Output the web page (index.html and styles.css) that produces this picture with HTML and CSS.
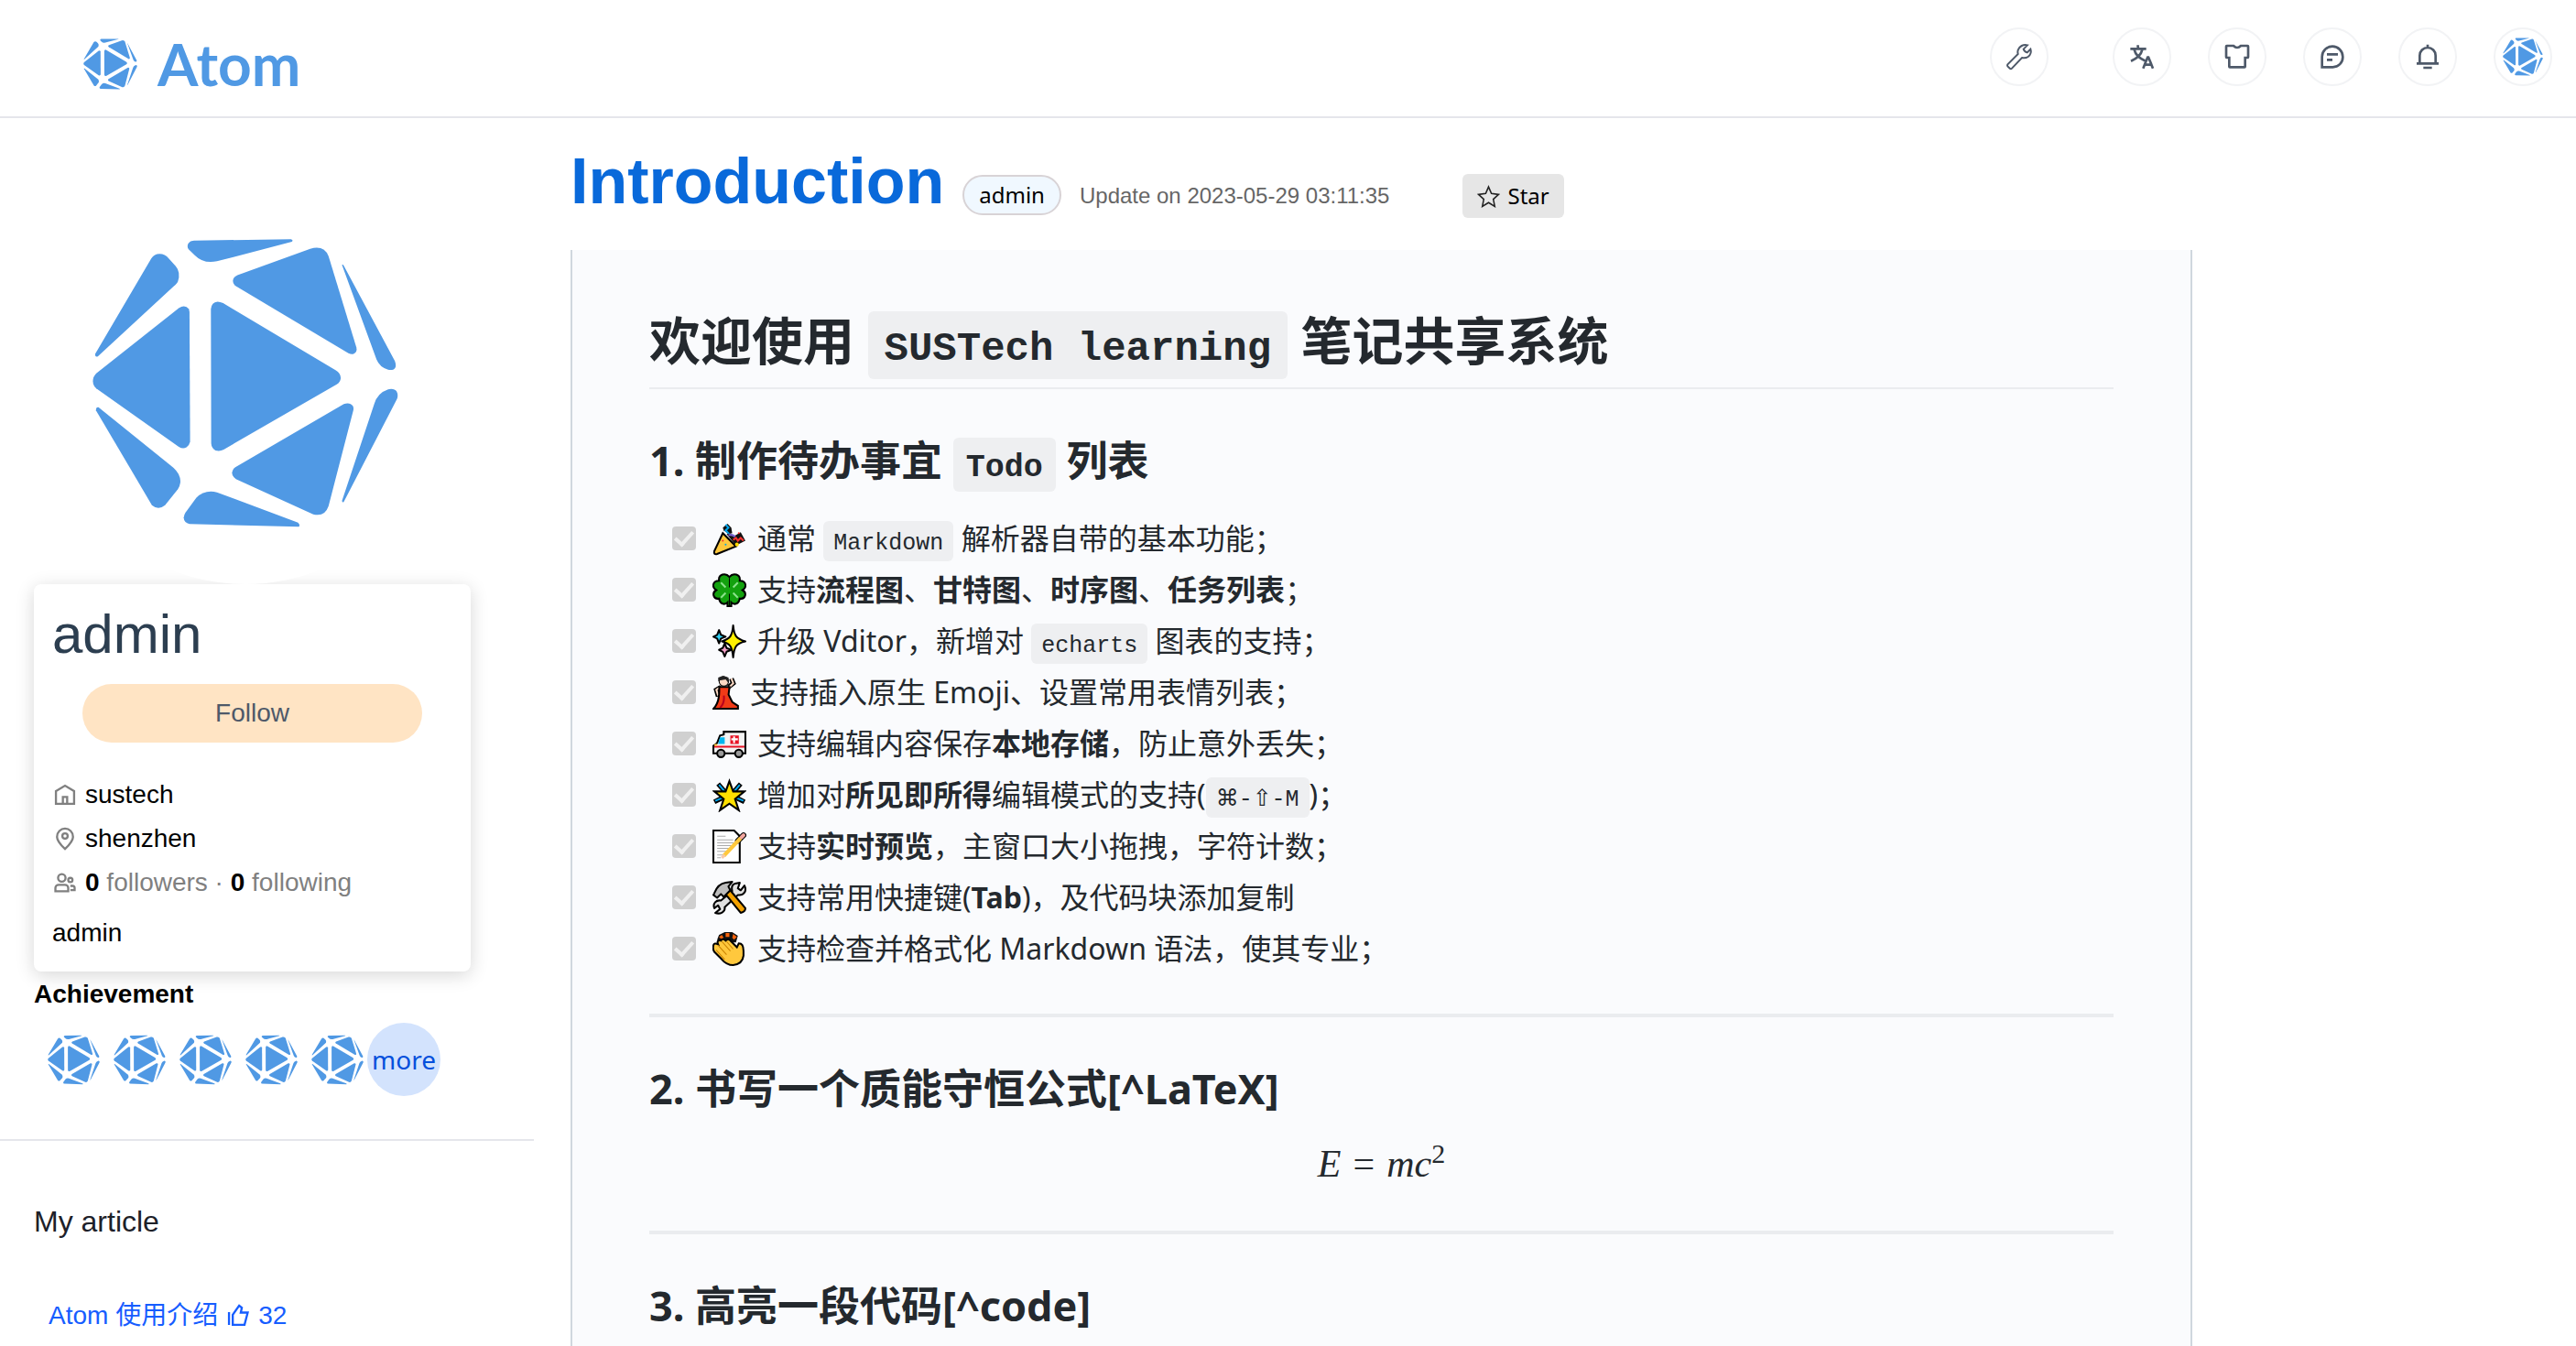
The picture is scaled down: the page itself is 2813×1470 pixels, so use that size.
FILE: index.html
```html
<!DOCTYPE html>
<html lang="zh-CN">
<head>
<meta charset="utf-8">
<title>Atom - Introduction</title>
<link rel="stylesheet" href="styles.css">
</head>
<body>
<svg class="sprite" aria-hidden="true">
  <symbol id="atom" viewBox="120 58 1006 950">
    <path d="M437 95C428 82 438 66 455 66L772 62Q781 65 775 70L530 134Q485 143 458 115Z"/>
    <path d="M315 125Q325 110 342 110Q360 110 372 125L395 150Q412 170 402 200Q400 205 388 216L140 445Q131 449 131 438Z"/>
    <path d="M405 287Q425 274 438 290L440 300L442 725Q440 735 430 743Q418 749 405 741L135 550Q124 540 124 526Q124 512 135 501Z"/>
    <path d="M510 290Q512 268 532 266Q540 266 550 271L918 490Q935 500 935 516Q934 530 922 537L552 750Q540 757 525 753Q512 745 511 730Z"/>
    <path d="M597 179L835 93Q880 80 895 117L986 415Q990 430 977 437Q970 440 960 435L592 215Q582 208 582 198Q583 185 597 179Z"/>
    <path d="M939 146Q942 143 945 149L1112 460Q1120 480 1108 488Q1100 491 1090 489Q1062 480 1052 455Z"/>
    <path d="M1045 600Q1055 565 1090 553Q1110 549 1118 560Q1124 572 1119 585L945 921Q941 926 939 918Z"/>
    <path d="M590 808L945 601Q965 594 975 608Q978 615 976 622L895 935Q882 972 845 962L592 847Q579 838 579 826Q580 815 590 808Z"/>
    <path d="M427 956L462 908Q490 880 530 890L795 989Q803 996 798 1003L440 994Q422 990 421 973Q422 963 427 956Z"/>
    <path d="M134 622Q133 610 142 612L388 810Q412 832 410 858Q408 872 402 880L360 932Q338 950 317 932Z"/>
  </symbol>
</svg>

<header class="topbar">
  <a class="brand" href="#"><svg class="brand-mark"><use href="#atom"/></svg><span>Atom</span></a>
  <nav class="tools" aria-label="Tools">
    <button class="tool tool-first" aria-label="Settings"><svg class="thin" viewBox="0 0 48 48"><path d="M37.500 5C31 3 24 7 22 13Q21 16 22 19.500L5 36.500Q4 38 5 39.500L9 43.500Q10.500 44.500 12 43L28.500 25.500Q34 27 38.500 24Q45 19 42.500 11.500L37 17Q32.500 16 31 11.500Z"/></svg></button>
    <button class="tool" aria-label="Language"><svg viewBox="0 0 48 48"><path d="m42 43-2.385-6M26 43l2.384-6m11.231 0-.795-2-4.18-10h-1.28l-4.181 10-.795 2m11.231 0h-11.23M17 5l1 5M5 11h26M11 11s1.889 7.826 6.611 12.174C22.333 27.522 30 31 30 31M25 11s-1.889 7.826-6.611 12.174C13.667 27.522 6 31 6 31"/></svg></button>
    <button class="tool" aria-label="Theme"><svg viewBox="0 0 48 48"><path d="M17.936 6H7a1 1 0 0 0-1 1v17.559a1 1 0 0 0 1 1h4V40a1 1 0 0 0 1 1h24a1 1 0 0 0 1-1V25.559h4a1 1 0 0 0 1-1V7a1 1 0 0 0-1-1H30.064C28.854 7.230 26.590 9.059 24 9.059S19.147 7.230 17.936 6Z"/></svg></button>
    <button class="tool" aria-label="Messages"><svg viewBox="0 0 48 48"><path d="M15 20h18m-18 9h9M7 41h17.630C33.670 41 41 33.670 41 24.630V24c0-9.389-7.611-17-17-17S7 14.611 7 24v17Z"/></svg></button>
    <button class="tool" aria-label="Notifications"><svg viewBox="0 0 48 48"><path d="M24 9c7.180 0 13 5.820 13 13v13H11V22c0-7.180 5.820-13 13-13Zm0 0V4M6 35h36m-25 7h14"/></svg></button>
    <button class="tool" aria-label="Account"><svg class="tool-avatar"><use href="#atom"/></svg></button>
  </nav>
</header>

<div class="page">
  <aside class="side">
    <section class="profile">
      <div class="avatar"><svg><use href="#atom"/></svg></div>
      <div class="card">
        <h2 class="name">admin</h2>
        <button class="follow">Follow</button>
        <ul class="facts">
          <li><svg viewBox="0 0 48 48"><path d="M7 17 24 7l17 10v24H7V17ZM20 28h8v13h-8V28Z"/></svg><span>sustech</span></li>
          <li><svg viewBox="0 0 48 48"><circle cx="24" cy="19" r="5"/><path d="M39 20.405C39 28.914 24 43 24 43S9 28.914 9 20.405C9 11.897 15.716 5 24 5c8.284 0 15 6.897 15 15.405Z"/></svg><span>shenzhen</span></li>
          <li><svg viewBox="0 0 48 48"><circle cx="18" cy="15" r="7"/><circle cx="34" cy="19" r="4"/><path d="M6 34a6 6 0 0 1 6-6h12a6 6 0 0 1 6 6v6H6v-6ZM34 30h4a4 4 0 0 1 4 4v4h-8"/></svg><span class="muted"><b>0</b> followers · <b>0</b> following</span></li>
        </ul>
        <p class="bio">admin</p>
      </div>
      <h3 class="label">Achievement</h3>
      <div class="achievements">
        <svg><use href="#atom"/></svg><svg><use href="#atom"/></svg><svg><use href="#atom"/></svg><svg><use href="#atom"/></svg><svg><use href="#atom"/></svg>
        <a class="more" href="#">more</a>
      </div>
    </section>
    <section class="mine">
      <h3>My article</h3>
      <a href="#">Atom 使用介绍 <svg viewBox="0 0 48 48"><path d="M7 17v24M14 22v19h22L42 18H29L31 9 26 5 14 22Z"/></svg> 32</a>
    </section>
  </aside>

  <main class="main">
    <div class="heading">
      <h1>Introduction</h1>
      <a class="author" href="#">admin</a>
      <time datetime="2023-05-29T03:11:35">Update on 2023-05-29 03:11:35</time>
      <button class="star"><svg viewBox="0 0 48 48"><path d="M24 4l6 14 15 2-11 10 3 15-13-8-13 8 3-15L3 20l15-2Z"/></svg><span>Star</span></button>
    </div>
    <article class="doc">
      <h1>欢迎使用 <code>SUSTech learning</code> 笔记共享系统</h1>
      <h2>1. 制作待办事宜 <code>Todo</code> 列表</h2>
      <ul class="tasks">
        <li><label><input type="checkbox" checked disabled>
          <svg class="emoji" viewBox="0 0 36 36"><path d="M11 12 25 26 5 34Q1 35 2 31Z" fill="#ffc83d" stroke="#000" stroke-width="2"/><path d="M11 6l5-4 4 4 1 6-4 1-5-4Z" fill="#111"/><path d="M14 3l3 3-3 3 4 4" fill="none" stroke="#00a6ed" stroke-width="2"/><path d="M15 13q5-2 8 2l7-4 5 9-10 5Z" fill="#111"/><path d="M22 19l3-2 2 3 3-3 3 3" fill="none" stroke="#f8312f" stroke-width="2"/><path d="M17 14q5-1 7 2" fill="none" stroke="#7860d0" stroke-width="2"/><circle cx="26" cy="24" r="2" fill="#ffd800"/><circle cx="28" cy="12" r="1" fill="#f8312f"/><circle cx="11" cy="20" r="1" fill="#f8312f"/><circle cx="14" cy="24" r="1" fill="#00a6ed"/></svg>
          <span>通常 <code>Markdown</code> 解析器自带的基本功能；</span></label></li>
        <li><label><input type="checkbox" checked disabled>
          <svg class="emoji" viewBox="0 0 36 36"><path d="M18 4C14-1 6 1 7 8 0 8-1 15 4 18-1 21 1 28 7 27 8 33 13 34 16 31V35H20V31C23 34 28 33 29 27 35 28 37 21 32 18 37 15 36 8 29 8 30 1 22-1 18 4Z" fill="#13a10e" stroke="#000" stroke-width="2"/><path d="M18 5v10M18 22v12" stroke="#000" stroke-width="1"/><path d="M9 10l5 5M27 10l-5 5M9 26l5-5M27 26l-5-5" stroke="#8be28b" stroke-width="2"/></svg>
          <span>支持<b>流程图</b>、<b>甘特图</b>、<b>时序图</b>、<b>任务列表</b>；</span></label></li>
        <li><label><input type="checkbox" checked disabled>
          <svg class="emoji" viewBox="0 0 36 36"><g stroke="#000" stroke-width="2" stroke-linejoin="round"><path d="M7 6l2 5 5 2-5 2-2 5-2-5-4-2 4-2Z" fill="#31d2f7"/><path d="M13 20l2 5 5 2-5 2-2 5-2-5-4-2 4-2Z" fill="#f4a0c8"/><path d="M22 1C23 12 25 15 35 18 25 20 23 24 22 35 21 24 19 20 10 18 19 15 21 12 22 1Z" fill="#fff100"/></g></svg>
          <span>升级 Vditor，新增对 <code>echarts</code> 图表的支持；</span></label></li>
        <li><label><input type="checkbox" checked disabled>
          <svg class="emoji emoji-narrow" viewBox="0 0 28 36"><path d="M9 12l-5 3 2 7M17 12l5-4-2-5" fill="none" stroke="#000" stroke-width="5"/><path d="M8 12l-4 3 2 6M18 12l4-4-2-5" fill="none" stroke="#fcd9c4" stroke-width="2"/><path d="M7 12h11l-1 8 4 8 6 4v3H1q7-7 6-23Z" fill="#f03a17" stroke="#000" stroke-width="2"/><path d="M12 21q1 8-4 13" fill="none" stroke="#b8001e" stroke-width="2"/><circle cx="12" cy="6" r="5" fill="#fcd9c4" stroke="#000" stroke-width="1"/><path d="M6 6V2l5-2 6 2v6l-3-4-7 1Z" fill="#222"/></svg>
          <span>支持插入原生 Emoji、设置常用表情列表；</span></label></li>
        <li><label><input type="checkbox" checked disabled>
          <svg class="emoji" viewBox="0 0 36 36"><path d="M12 5H35V28H1V20L5 17 8 9 12 8Z" fill="#f3f3f3" stroke="#000" stroke-width="2"/><path d="M8 11h5v7H6Z" fill="#00b7f0"/><path d="M19 9h9v9h-9Z" fill="#e81224"/><path d="M23 10v7M20 13h7" stroke="#fff" stroke-width="2"/><path d="M2 21h32" stroke="#e81224" stroke-width="2"/><path d="M2 18h3v2H2Z" fill="#ffc83d"/><g fill="#9a9a9a" stroke="#000" stroke-width="2"><circle cx="9" cy="28" r="4"/><circle cx="28" cy="28" r="4"/></g></svg>
          <span>支持编辑内容保存<b>本地存储</b>，防止意外丢失；</span></label></li>
        <li><label><input type="checkbox" checked disabled>
          <svg class="emoji" viewBox="0 0 36 36"><path d="M6 6l7 8M30 6l-7 8M2 25l8-4M34 25l-8-4" stroke="#000" stroke-width="5"/><path d="M7 7l6 7M29 7l-6 7M3 24l7-3M33 24l-7-3" stroke="#00a6ed" stroke-width="2"/><path d="M18 3l4 11h12l-10 8 4 12-10-7-10 7 4-12L2 14h12Z" fill="#ffe000" stroke="#000" stroke-width="2"/></svg>
          <span>增加对<b>所见即所得</b>编辑模式的支持(<code>⌘-⇧-M</code>)；</span></label></li>
        <li><label><input type="checkbox" checked disabled>
          <svg class="emoji" viewBox="0 0 36 36"><path d="M1 1H23L29 7V35H1Z" fill="#fff" stroke="#000" stroke-width="2"/><path d="M5 7h9M5 11h17M5 14h18M5 17h17M5 20h14M5 23h12M5 27h8M5 30h4" stroke="#aaa" stroke-width="1"/><path d="M27 12L33 6" stroke="#000" stroke-width="6" stroke-linecap="round"/><path d="M12 28L30 9" stroke="#ffc83d" stroke-width="4"/><path d="M10 30l3-3" stroke="#f8c9a8" stroke-width="3"/><path d="M31 8L33 6" stroke="#f4a7a0" stroke-width="4" stroke-linecap="round"/></svg>
          <span>支持<b>实时预览</b>，主窗口大小拖拽，字符计数；</span></label></li>
        <li><label><input type="checkbox" checked disabled>
          <svg class="emoji" viewBox="0 0 36 36"><g stroke="#000" stroke-width="2" stroke-linejoin="round"><path d="M24 3l5-1-2 6 3 2 4-5c3 6-1 11-7 10L13 28c1 5-5 8-10 6l5-4-2-4-4 3c-2-5 2-9 7-8L21 11c-1-4 0-7 3-8Z" fill="#e0e0e0"/><path d="M13 13l5-4L35 29q0 4-5 5Z" fill="#f2a100"/><path d="M2 13Q6 3 14 2L21 1 17 6 19 10 12 17 9 14 5 18 1 15Z" fill="#bdbdbd"/></g></svg>
          <span>支持常用快捷键(<b>Tab</b>)，及代码块添加复制</span></label></li>
        <li><label><input type="checkbox" checked disabled>
          <svg class="emoji" viewBox="0 0 36 36"><path d="M5 8l2-5 6-3h8l6 4-2 7H7Z" fill="#111"/><path d="M9 7l-2-2 3-2 2 3ZM14 5V1h4v4ZM21 6l1-4 4 3-3 3Z" fill="#f7630c"/><path d="M1 14Q2 11 6 13 4 8 9 9 11 6 14 9 17 6 20 10L26 16 28 12Q33 12 33 20V25Q32 34 22 35 15 35 10 29L2 21Q0 18 1 14Z" fill="#ffc83d" stroke="#000" stroke-width="2"/><path d="M4 19l9 10M6 14l9 10M10 10l9 10M15 10l7 8" stroke="#c98200" stroke-width="1"/></svg>
          <span>支持检查并格式化 Markdown 语法，使其专业；</span></label></li>
      </ul>
      <hr>
      <h2>2. 书写一个质能守恒公式[^LaTeX]</h2>
      <p class="formula"><i>E</i><span class="relation">=</span><i>mc</i><sup>2</sup></p>
      <hr>
      <h2>3. 高亮一段代码[^code]</h2>
    </article>
  </main>
</div>
</body>
</html>
```

FILE: styles.css
```css
* { box-sizing: border-box; }

body {
  margin: 0;
  min-height: 100vh;
  display: flex;
  flex-direction: column;
  background: #fff;
  color: #000;
  font: 28px/48px "Liberation Sans", "Noto Sans CJK SC", sans-serif;
}

h1, h2, h3, p, ul { margin: 0; padding: 0; font-weight: 400; }
ul { list-style: none; }
a { text-decoration: none; }
svg { display: block; flex: none; }
button { border: 0; padding: 0; font: inherit; cursor: pointer; }
.sprite { position: absolute; width: 0; height: 0; }
use { fill: #5099e4; }

.topbar {
  display: flex;
  justify-content: space-between;
  padding: 30px 26px 33px 91px;
  border-bottom: 2px solid #e5e6eb;
}
.brand {
  display: flex;
  align-items: center;
  gap: 22px;
  height: 64px;
  padding-top: 16px;
  color: #5099e4;
  font: 700 64px/64px Lato, sans-serif;
}
.brand-mark { width: 59px; height: 56px; }
.tools { display: flex; gap: 40px; }
.tool {
  display: grid;
  place-items: center;
  width: 64px;
  height: 64px;
  border: 2px solid #f2f3f5;
  border-radius: 50%;
  background: #fff;
}
.tool-first { margin-right: 30px; }
.tool svg { width: 32px; height: 32px; fill: none; stroke: #4e5969; stroke-width: 4; }
.tool .thin { stroke-width: 3; }
.tool .tool-avatar { width: 44px; height: 42px; stroke: none; }

.page {
  flex: 1;
  display: grid;
  grid-template-columns: 583fr 1771fr 379fr;
  column-gap: 40px;
}

.profile { padding: 69px 69px 47px 37px; border-bottom: 2px solid #e5e6eb; }
.avatar {
  position: relative;
  z-index: 1;
  display: grid;
  place-items: center;
  width: 440px;
  height: 440px;
  margin-left: 11px;
  border-radius: 50%;
  background: #fff;
}
.avatar svg { width: 336px; height: 317px; }
.card {
  padding: 21px 20px 18px;
  border-radius: 8px;
  background: #fff;
  box-shadow: 0 4px 20px rgba(0, 0, 0, .16);
}
.name { color: #2c3e50; font-size: 60px; line-height: 68px; }
.follow {
  display: block;
  width: calc(100% - 66px);
  height: 64px;
  margin: 20px 33px 33px;
  border-radius: 32px;
  background: #ffe4c4;
  color: #4e5969;
}
.facts li { display: flex; align-items: center; gap: 8px; }
.facts svg { width: 28px; height: 28px; fill: none; stroke: #808080; stroke-width: 4; }
.muted { color: #808080; }
.muted b { color: #000; }
.bio { margin-top: 7px; }
.label { font-size: 28px; font-weight: 700; line-height: 50px; }
.achievements { display: flex; align-items: center; gap: 15px; margin-top: 6px; padding-left: 15px; }
.achievements svg { width: 57px; height: 55px; }
.more {
  width: 80px;
  height: 80px;
  margin-left: -11px;
  border-radius: 50%;
  background: #d3e3fd;
  color: #0550dc;
  font: 28px/80px "Noto Sans", sans-serif;
  text-align: center;
}
.mine { padding: 64px 37px 0; }
.mine h3 { margin-bottom: 55px; color: #1d2129; font-size: 32px; }
.mine a { display: flex; align-items: center; gap: 8px; padding-left: 16px; color: #165dff; }
.mine svg { width: 28px; height: 28px; fill: none; stroke: #165dff; stroke-width: 4; }

.main { display: flex; flex-direction: column; min-width: 0; }
.heading {
  display: flex;
  align-items: baseline;
  gap: 20px;
  padding: 29px 0 35px;
  white-space: nowrap;
}
.heading h1 { color: #0969da; font-size: 70px; font-weight: 700; line-height: 80px; }
.author {
  padding: 0 16px;
  border: 2px solid #d8d3d6;
  border-radius: 22px;
  background: #f0f8ff;
  color: #000;
  font: 24px/40px "Noto Sans", sans-serif;
}
.heading time { color: #666; font-size: 24px; line-height: 40px; }
.star {
  display: inline-flex;
  align-items: center;
  align-self: flex-end;
  gap: 8px;
  height: 48px;
  margin-left: 60px;
  padding: 0 16px;
  border-radius: 6px;
  background: #e6e6e6;
  font: 24px/48px "Noto Sans", sans-serif;
}
.star svg { width: 25px; height: 25px; fill: none; stroke: #222; stroke-width: 3; }

.doc {
  flex: 1;
  padding: 64px 84px 16px;
  border: solid #d0d7de;
  border-width: 0 2px;
  background: #fafbfd;
  color: #24292e;
  font: 32px/48px "Noto Sans", "Noto Sans CJK SC", sans-serif;
}
.doc h1, .doc h2 { font-weight: 700; }
.doc h1 { padding-bottom: 18px; border-bottom: 2px solid #eaecef; font-size: 56px; line-height: 68px; }
.doc h2 { margin-top: 50px; font-size: 45px; line-height: 55px; }
.doc code {
  padding: 10px 11px 5px;
  border-radius: 6px;
  background: #eeeff1;
  font: 25px/1 "Liberation Mono", "DejaVu Sans", monospace;
}
.doc h1 code { padding: 16px 18px 8px; font-size: 44px; font-weight: 700; }
.doc h2 code { padding: 13px 14px 6px; font-size: 35px; font-weight: 700; }
.tasks { display: grid; gap: 8px; margin: 34px 0 47px; padding-left: 25px; }
.tasks label { display: flex; align-items: center; height: 48px; }
.tasks input {
  appearance: none;
  display: grid;
  place-items: center;
  width: 26px;
  height: 26px;
  margin: 0 18px 0 0;
  border-radius: 4px;
  background: #d0d0d0;
}
.tasks input::before {
  content: "";
  width: 8px;
  height: 16px;
  margin-bottom: 4px;
  border: solid #f0f0f0;
  border-width: 0 4px 4px 0;
  transform: rotate(42deg);
}
.emoji { width: 37px; height: 37px; margin-right: 12px; }
.emoji-narrow { width: 29px; }
.doc hr { height: 4px; margin: 0; border: 0; background: #eaecef; }
.formula {
  margin: 29px 0 49px;
  font: 42px/48px "Liberation Serif", serif;
  text-align: center;
}
.formula .relation { margin: 0 13px; }
.formula sup { font-size: 30px; line-height: 1; }
```
